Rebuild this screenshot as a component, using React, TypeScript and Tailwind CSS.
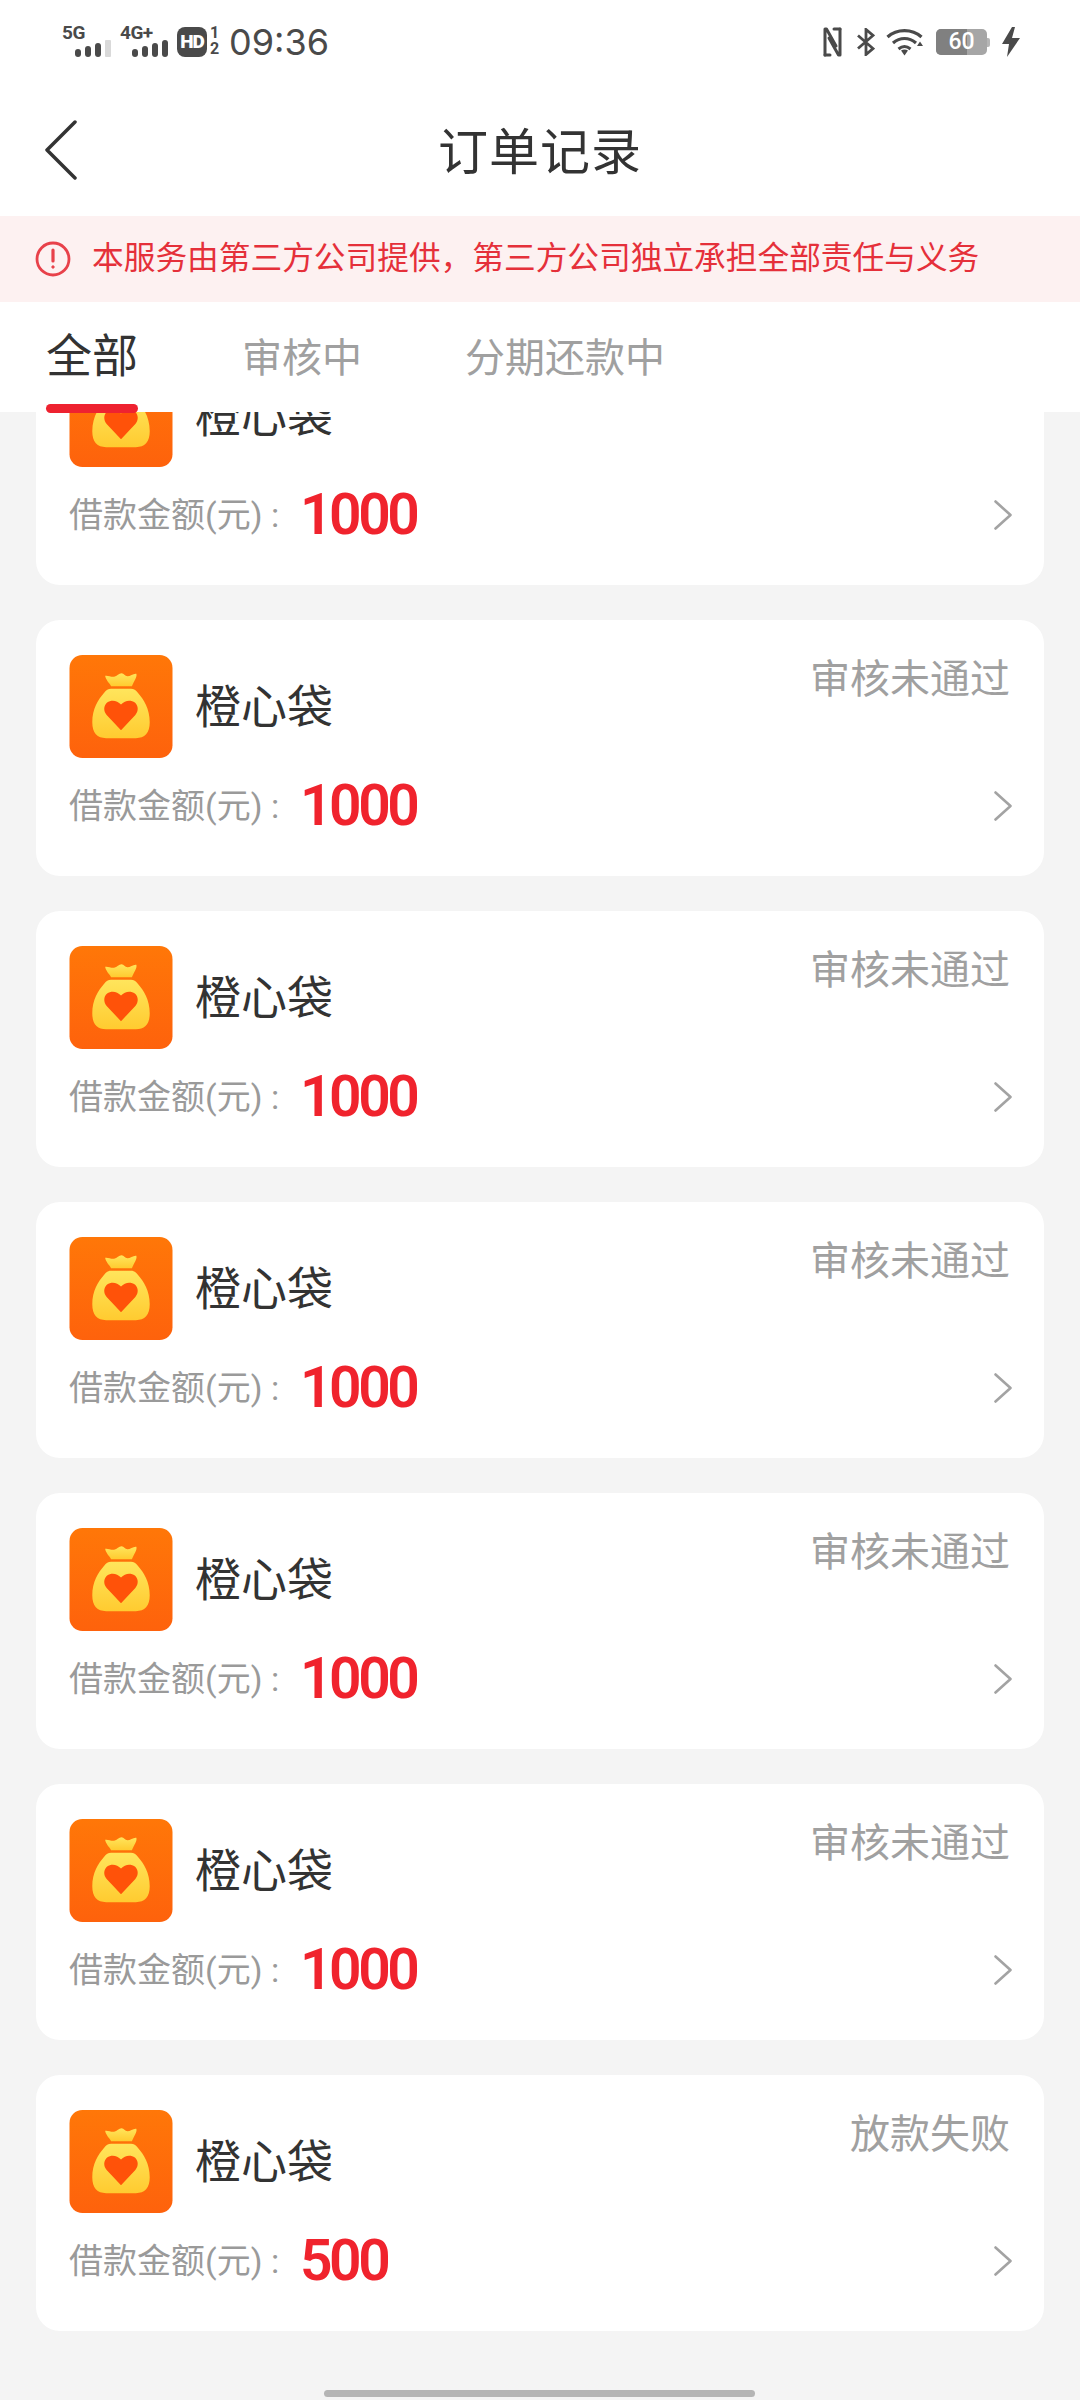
import React from "react";

function Bag() {
  return (
    <svg viewBox="0 0 104 104" className="w-[104px] h-[103px] shrink-0 block">
      <defs>
        <linearGradient id="bgG" x1="0" y1="0" x2="0" y2="1">
          <stop offset="0" stopColor="#ff7708" />
          <stop offset="1" stopColor="#fe620c" />
        </linearGradient>
        <linearGradient id="bagG" x1="0" y1="0" x2="0" y2="1">
          <stop offset="0" stopColor="#ffe55c" />
          <stop offset="1" stopColor="#ffcb30" />
        </linearGradient>
      </defs>
      <rect width="104" height="104" rx="13" fill="url(#bgG)" />
      <path d="M36 21c3-.5 6 1.500 9 1 3-.5 5-3.500 7.500-3.500 2.500 0 3.500 3 6 3 3 0 6-3 9-2.500 1 3-2 7-4.500 12.500H42C40 28 36.500 25 36 21Z" fill="url(#bagG)" />
      <path d="M42 34h20c3 0 5 1.500 7 4 6 7 12 16 12 30 0 11-5 16-14 16H37c-9 0-14-5-14-16 0-14 6-23 12-30 2-2.500 4-4 7-4Z" fill="url(#bagG)" />
      <path d="M52 76 37.500 60.500C34 56.500 34.500 51 38 48c4-3 10-2.500 14 2 4-4.500 10-5 14-2 3.500 3 4 8.500.5 12.500L52 76Z" fill="#ff5209" />
    </svg>
  );
}

function Chevron() {
  return (
    <svg viewBox="0 0 18 30" className="w-[18px] h-[30px] shrink-0 -mr-[2px]" fill="none" stroke="#a3a3a3" strokeWidth="2.600" strokeLinecap="round" strokeLinejoin="round">
      <path d="M1.500 1.500 16.500 15 1.500 28.500" />
    </svg>
  );
}

function Card({ status, amount, className = "" }: { status: string; amount: string; className?: string }) {
  return (
    <div className={`bg-white rounded-[24px] h-[256px] shrink-0 pt-[35px] pl-[33px] pr-[34px] ${className}`}>
      <div className="flex items-start">
        <Bag />
        <div className="ml-[22px] mt-[29px] text-[46px] leading-[46px] font-normal text-[#333333]">橙心袋</div>
        <div className="ml-auto mt-[2px] text-[40px] leading-[46px] font-normal text-[#a0a0a0]">{status}</div>
      </div>
      <div className="flex items-center h-[66px] mt-[15px]">
        <div className="w-[231px] text-[34px] leading-[46px] font-normal text-[#9a9a9a] whitespace-nowrap">借款金额(元) :</div>
        <div className="text-[57px] leading-[66px] font-semibold tracking-[-3.500px] text-[#f0232d]">{amount}</div>
        <div className="ml-auto"><Chevron /></div>
      </div>
    </div>
  );
}

function Bars({ dim }: { dim?: boolean }) {
  return (
    <svg viewBox="0 0 36 17" className="w-[36px] h-[17px] block" fill="#4a4a4a">
      <rect x="0" y="9" width="6" height="8" rx="3" />
      <rect x="10" y="6" width="6" height="11" rx="3" />
      <rect x="20" y="3" width="6" height="14" rx="3" />
      <rect x="30" y="0" width="6" height="17" rx={dim ? 1 : 3} fill={dim ? "#d9d9d9" : "#4a4a4a"} />
    </svg>
  );
}

function StatusBar() {
  return (
    <div className="h-[72px] flex items-start justify-between pt-[24px] pl-[62px] pr-[60px] text-[#4a4a4a]">
      <div className="flex items-start">
        <div className="w-[48px] h-[34px] flex flex-col">
          <div className="text-[19px] leading-[17px] font-bold font-['Roboto',sans-serif] tracking-[-0.500px]">5G</div>
          <div className="ml-[13px] -mt-[1px]"><Bars dim /></div>
        </div>
        <div className="w-[48px] h-[34px] ml-[10px] flex flex-col">
          <div className="text-[19px] leading-[17px] font-bold font-['Roboto',sans-serif] tracking-[-0.500px]">4G+</div>
          <div className="ml-[12px] -mt-[1px]"><Bars /></div>
        </div>
        <div className="ml-[9px] mt-[3px] w-[30px] h-[30px] rounded-[8px] bg-[#4a4a4a] text-white text-[19px] leading-[30px] font-black text-center font-['Roboto',sans-serif] tracking-[-1px]">HD</div>
        <div className="ml-[2px] mt-[1px] w-[11px] text-[16px] leading-[16px] font-bold text-center font-['Roboto',sans-serif]">1<br />2</div>
        <div className="ml-[9px] -mt-[1px] text-[36px] leading-[38px] font-['Inter',sans-serif] font-normal">09:36</div>
      </div>
      <div className="flex items-start">
        <svg viewBox="0 0 19 30" className="w-[19px] h-[30px] mt-[3px]" fill="none" stroke="#4a4a4a" strokeWidth="3" strokeLinejoin="round" strokeLinecap="round">
          <path d="M2 28V2h1.500L13 19" />
          <path d="M17 2v26h-1.500L6 11" />
          <path d="M11 2h6" />
          <path d="M2 28h5" />
        </svg>
        <svg viewBox="0 0 18 28" className="w-[18px] h-[28px] ml-[15px] mt-[4px]" fill="none" stroke="#4a4a4a" strokeWidth="2.800">
          <path d="M1 7.500 16 20.500 9 26.500V1.500L16 7.500 1 20.500" />
        </svg>
        <svg viewBox="0 0 37 27" className="w-[37px] h-[27px] ml-[11px] mt-[5px]" fill="none">
          <path d="M1.500 8C11 -.500 26 -.500 35.500 8" stroke="#4a4a4a" strokeWidth="3.200" />
          <path d="M7 14C14 8 23 8 30 14" stroke="#4a4a4a" strokeWidth="3.200" />
          <path d="M12.500 20c4-3.300 8-3.300 12 0" stroke="#4a4a4a" strokeWidth="3" />
          <path d="M15 21.500c2-1.500 5-1.500 7 0l-3.500 5Z" fill="#4a4a4a" />
          <path d="M31 17h6l-3-4.500Z" fill="#4a4a4a" />
        </svg>
        <div className="ml-[13px] mt-[5px] flex items-center">
          <div className="w-[51px] h-[26px] rounded-[5px] bg-[#a6a6a6] overflow-hidden relative">
            <div className="w-[31px] h-full bg-[#808080]" />
            <div className="absolute inset-0 text-center text-white text-[23px] leading-[26px] font-medium font-['Roboto',sans-serif]">60</div>
          </div>
          <div className="w-[3px] h-[9px] rounded-r-[2px] bg-[#b5b5b5]" />
        </div>
        <svg viewBox="0 0 18 30" className="w-[18px] h-[30px] ml-[12px] mt-[3px]" fill="#4a4a4a">
          <path d="M10 0 0 17h7l-2 13L18 11h-8l3-11Z" />
        </svg>
      </div>
    </div>
  );
}

export default function App() {
  return (
    <div className="w-[1080px] h-[2400px] bg-[#f4f4f4] overflow-hidden relative flex flex-col font-['Roboto','Noto_Sans_CJK_SC',sans-serif]">
      <div className="bg-white shrink-0">
        <StatusBar />
        <div className="h-[144px] relative flex items-center justify-center">
          <svg viewBox="0 0 32 60" className="absolute left-[45px] top-[48px] w-[32px] h-[60px]" fill="none" stroke="#333333" strokeWidth="3.500" strokeLinecap="round" strokeLinejoin="round">
            <path d="M30 2 2 30l28 28" />
          </svg>
          <div className="mt-[17px] text-[50px] leading-[60px] tracking-[1px] font-normal text-[#333333]">订单记录</div>
        </div>
        <div className="h-[86px] bg-[#fdf1f1] flex items-center pl-[35px]">
          <svg viewBox="0 0 36 36" className="w-[36px] h-[36px] shrink-0" fill="none" stroke="#e8414a">
            <circle cx="18" cy="18" r="16" strokeWidth="2.800" />
            <path d="M18 9v11" strokeWidth="3.200" strokeLinecap="round" />
            <circle cx="18" cy="26" r="1.200" fill="#e8414a" strokeWidth="1" />
          </svg>
          <div className="ml-[21px] text-[31.700px] leading-[44px] font-normal text-[#e5303a] whitespace-nowrap">本服务由第三方公司提供，第三方公司独立承担全部责任与义务</div>
        </div>
        <div className="h-[110px] flex items-start pl-[46px]">
          <div className="relative h-[110px] w-[92px] flex justify-center">
            <div className="mt-[27px] text-[46px] leading-[54px] font-normal text-[#333333] whitespace-nowrap">全部</div>
            <div className="absolute left-0 right-0 bottom-[-1px] h-[9px] rounded-[5px] bg-[#ee2230] z-10" />
          </div>
          <div className="ml-[104px] mt-[32px] text-[40px] leading-[50px] font-normal text-[#a0a0a0]">审核中</div>
          <div className="ml-[103px] mt-[32px] text-[40px] leading-[50px] font-normal text-[#a0a0a0]">分期还款中</div>
        </div>
      </div>
      <div className="flex-1 overflow-hidden px-[36px] flex flex-col gap-[35px]">
        <Card status="" amount="1000" className="-mt-[83px]" />
        <Card status="审核未通过" amount="1000" />
        <Card status="审核未通过" amount="1000" />
        <Card status="审核未通过" amount="1000" />
        <Card status="审核未通过" amount="1000" />
        <Card status="审核未通过" amount="1000" />
        <Card status="放款失败" amount="500" />
      </div>
      <div className="absolute left-[324px] top-[2390px] w-[431px] h-[7px] rounded-full bg-[#b5b5b5]" />
    </div>
  );
}
